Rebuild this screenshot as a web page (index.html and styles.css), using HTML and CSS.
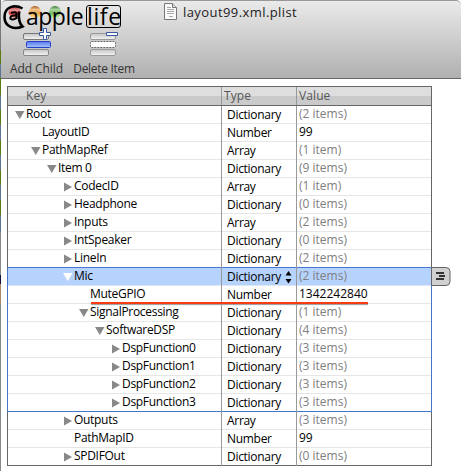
FILE: index.html
```html
<!DOCTYPE html>
<html lang="en">
<head>
<meta charset="utf-8">
<title>layout99.xml.plist</title>
<link rel="stylesheet" href="styles.css">
</head>
<body>
<div class="desktop"></div>
<main class="window">
  <header class="toolbar">
    <h1 class="title"><svg width="13" height="17" viewBox="0 0 13 17"><path d="M.5.5h8l4 4v12H.5z" fill="#fafafa" stroke="#777"/><path d="M8.500.5v4h4" fill="#ddd" stroke="#777"/><path d="M3 4.500h4M3 6.500h7M3 8.500h7M3 10.500h7M5 13.500h4" stroke="#aaa"/></svg><span>layout99.xml.plist</span></h1>
    <div class="actions">
      <button class="action add"><svg width="28" height="29" viewBox="0 0 28 29"><defs><linearGradient id="bar" x2="0" y2="1"><stop stop-color="#c5c5c5"/><stop offset="1" stop-color="#f4f4f4"/></linearGradient><linearGradient id="blue" x2="0" y2="1"><stop stop-color="#5579ee"/><stop offset="1" stop-color="#a9c5ff"/></linearGradient></defs><rect x=".5" y="5.500" width="25" height="6" rx="1.500" fill="url(#bar)" stroke="#777"/><rect x="3.500" y="13.500" width="24" height="6" rx="1" fill="url(#blue)" stroke="#263ec4"/><rect x=".5" y="21.500" width="25" height="6" rx="1.500" fill="url(#bar)" stroke="#888"/><path d="M20.500.5h3v4h4v3h-4v4h-3v-4h-4v-3h4z" fill="#fff" stroke="#3858a0"/></svg><span>Add Child</span></button>
      <button class="action del"><svg width="28" height="29" viewBox="0 0 28 29"><rect x=".5" y="5.500" width="25" height="6" rx="1.500" fill="url(#bar)" stroke="#999"/><rect x=".5" y="13.500" width="25" height="6" rx="1" fill="#fff" stroke="#666" stroke-dasharray="2 1"/><rect x=".5" y="21.500" width="25" height="6" rx="1.500" fill="url(#bar)" stroke="#999"/><path d="M16.500 4.500h11v3h-11z" fill="#fff" stroke="#3858a0"/></svg><span>Delete Item</span></button>
    </div>
    <div class="brand">
      <svg class="lights" width="64" height="32" viewBox="0 0 64 32"><defs><linearGradient id="r" x1="0" x2="0" y1="0" y2="1"><stop stop-color="#b92830"/><stop offset=".35" stop-color="#e8999a"/><stop offset=".6" stop-color="#d93a3a"/><stop offset="1" stop-color="#ff9d91"/></linearGradient><linearGradient id="y" x1="0" x2="0" y1="0" y2="1"><stop stop-color="#a9571c"/><stop offset=".3" stop-color="#efc48c"/><stop offset=".6" stop-color="#e8a04a"/><stop offset="1" stop-color="#ffe294"/></linearGradient><linearGradient id="g" x1="0" x2="0" y1="0" y2="1"><stop stop-color="#3f7a3a"/><stop offset=".3" stop-color="#a9d6a0"/><stop offset=".6" stop-color="#72b85e"/><stop offset="1" stop-color="#c9f5a2"/></linearGradient></defs><circle cx="14.500" cy="12" r="6" fill="url(#r)"/><circle cx="35" cy="12" r="6" fill="url(#y)"/><circle cx="55" cy="12" r="6" fill="url(#g)"/><path d="M22.500 8.500C15 4 4.500 6.500 4.500 17c0 10 10 13 18 9.500C18.500 23 18.500 17 19 11.500" fill="none" stroke="#000" stroke-width="2.600"/><path d="M11 13q5-2 5.500 1v5M16 15.500c-7-.5-7 4.500-3 4q3-.5 3.500-2" fill="none" stroke="#000" stroke-width="2"/></svg>
      <span class="apple">apple</span><span class="life">life</span>
    </div>
  </header>
  <section class="outline">
    <div class="head"><span>Key</span><span>Type</span><span>Value</span></div>
    <div id="rows"></div>
  </section>
</main>
<script src="rows.js"></script>
</body>
</html>
```
FILE: styles.css
```css
body { margin: 0; width: 461px; height: 471px; overflow: hidden; position: relative; background: #fff; font: 12px "Open Sans", sans-serif; }
.desktop { position: absolute; left: 0; top: 0; width: 1px; height: 471px; background: linear-gradient(#777 0 50px, #5e7b12 50px 64px, #5c7594 64px 78px, #5e7b12 78px 95px, #5c7594 95px 110px, #5e7b12 110px 125px, #5c7594 125px 140px, #5e7b12 140px 155px, #5c7594 155px 170px, #5e7b12 170px 185px, #5c7594 185px 200px, #5e7b12 200px 215px, #5c7594 215px 232px, #888 232px 275px, #114 275px 284px, #a86 284px 304px, #888 304px); }
.window { margin-left: 1px; border-radius: 5px; }
.toolbar { position: relative; box-sizing: border-box; height: 79px; border-top: 1px solid #999; border-bottom: 1px solid #666; border-radius: 5px 5px 0 0; background: linear-gradient(#eaeaea, #b0b0b0); }
.title { margin: 0; padding: 2px 0 0 163px; height: 17px; display: flex; align-items: center; gap: 6px; font-size: 13px; font-weight: 400; letter-spacing: .42px; color: #222; }
.actions { display: flex; padding: 8px 0 0 9px; gap: 10px; }
.action { display: flex; flex-direction: column; align-items: center; border: 0; padding: 0; margin: 0; background: none; font: 12px "Open Sans", sans-serif; color: #333; white-space: nowrap; }
.action span { line-height: 17px; margin-top: 3px; }
.action svg { position: relative; }
.add { width: 53px; letter-spacing: -.1px; }
.del { width: 62px; letter-spacing: -.3px; }
.del { letter-spacing: -.3px; }
.brand { position: absolute; left: 0; top: 0; height: 32px; color: #000; }
.lights { position: absolute; left: -1px; top: -1px; }
.apple, .life { position: absolute; font: 23px/28px "Open Sans", sans-serif; }
.apple { left: 25px; top: 1px; letter-spacing: -.5px; }
.life { left: 85px; top: 4px; width: 33px; height: 21px; line-height: 20px; border: 1px solid #000; border-radius: 3px; text-align: center; letter-spacing: .6px; }
.outline { margin: 7px 0 0 6px; width: 425px; box-sizing: border-box; border: 1px solid #666; border-bottom: 0; }
.head, .row { display: grid; grid-template-columns: 213px 75px 1fr; box-sizing: border-box; }
.head { height: 19px; border-bottom: 1px solid #666; background: linear-gradient(#dedede 50%, #cacaca 50%); color: #555; line-height: 18px; }
.head span { padding-left: 2px; border-left: 1px solid #999; letter-spacing: .1px; }
.head span:first-child { padding-left: 18px; border-left: 0; }
.row { position: relative; height: 18px; border-bottom: 1px solid #e6e6e6; line-height: 16px; white-space: nowrap; }
.key { display: flex; align-items: center; height: 17px; letter-spacing: -.3px; }
.label { line-height: 15px; height: 17px; }
.level0 { padding-left: 6px; } .level1 { padding-left: 22px; } .level2 { padding-left: 38px; } .level3 { padding-left: 54px; } .level4 { padding-left: 70px; } .level5 { padding-left: 86px; } .level6 { padding-left: 102px; }
.tri { width: 12px; height: 10px; flex: none; fill: #888; }
.type { box-sizing: border-box; height: 18px; border-left: 1px solid #999; padding: 1px 0 0 5px; display: flex; justify-content: space-between; letter-spacing: -.3px; }
.value { box-sizing: border-box; height: 18px; border-left: 1px solid #999; padding-left: 2px; color: #808080; line-height: 15px; }
.plain { color: #000; }
.before, .end { border-bottom-color: #4676cc; }
.selected { background: #b6d3fe; border-bottom-color: #dde6f5; }
.selected .tri { fill: #fff; }
.branch::before, .branch::after { content: ""; position: absolute; width: 1px; height: 18px; background: #4676cc; left: -1px; top: 0; }
.branch::after { left: auto; right: -1px; }
.last { border-bottom-color: #666; }
.updown { margin: 2px 4px 0 0; }
.menu { position: absolute; left: 423px; top: -1px; z-index: 2; }
.underline { position: absolute; left: 83px; top: 16px; width: 277px; height: 2px; background: #f83b12; box-shadow: 0 1px 1px #999; z-index: 2; }
```
FILE: rows.js
```js
const rows = [
  [0, "open", "Root", "Dictionary", "(2 items)"],
  [1, "", "LayoutID", "Number", "99"],
  [1, "open", "PathMapRef", "Array", "(1 item)"],
  [2, "open", "Item 0", "Dictionary", "(9 items)"],
  [3, "shut", "CodecID", "Array", "(1 item)"],
  [3, "shut", "Headphone", "Dictionary", "(0 items)"],
  [3, "shut", "Inputs", "Array", "(2 items)"],
  [3, "shut", "IntSpeaker", "Dictionary", "(0 items)"],
  [3, "shut", "LineIn", "Dictionary", "(2 items)"],
  [3, "open", "Mic", "Dictionary", "(2 items)"],
  [4, "", "MuteGPIO", "Number", "1342242840"],
  [4, "open", "SignalProcessing", "Dictionary", "(1 item)"],
  [5, "open", "SoftwareDSP", "Dictionary", "(4 items)"],
  [6, "shut", "DspFunction0", "Dictionary", "(3 items)"],
  [6, "shut", "DspFunction1", "Dictionary", "(3 items)"],
  [6, "shut", "DspFunction2", "Dictionary", "(3 items)"],
  [6, "shut", "DspFunction3", "Dictionary", "(3 items)"],
  [3, "shut", "Outputs", "Array", "(3 items)"],
  [3, "", "PathMapID", "Number", "99"],
  [3, "shut", "SPDIFOut", "Dictionary", "(0 items)"]
];
const shapes = { open: "M1 1h9.500L5.750 9z", shut: "M2 .5v9l8-4.500z", "": "" };
const arrows = '<svg class="updown" width="7" height="13"><path d="M3.500 0 6.500 4.500H.5zM3.500 12.500 6.500 8H.5z"/></svg>';
const menu = '<svg class="menu" width="20" height="19"><path d="M.5.5H15q4 0 4 4v10q0 4-4 4H.5z" fill="#d0d0d0" stroke="#666"/><path d="M5 6h8M8 9h6M5 12h8" stroke="#333" stroke-width="2"/></svg>';
document.getElementById("rows").innerHTML = rows.map(([level, state, key, type, value], i) => {
  const cls = ["row"];
  if (i === 8) cls.push("before");
  if (i === 9) cls.push("selected");
  if (i >= 9 && i <= 16) cls.push("branch");
  if (i === 16) cls.push("end");
  if (i === 19) cls.push("last");
  return `<div class="${cls.join(" ")}"><span class="key level${level}"><svg class="tri" viewBox="0 0 12 10"><path d="${shapes[state]}"/></svg><span class="label">${key}</span></span><span class="type">${type}${i === 9 ? arrows : ""}</span><span class="value${value[0] === "(" ? "" : " plain"}">${value}</span>${i === 9 ? menu : ""}${i === 10 ? '<i class="underline"></i>' : ""}</div>`;
}).join("");
```
